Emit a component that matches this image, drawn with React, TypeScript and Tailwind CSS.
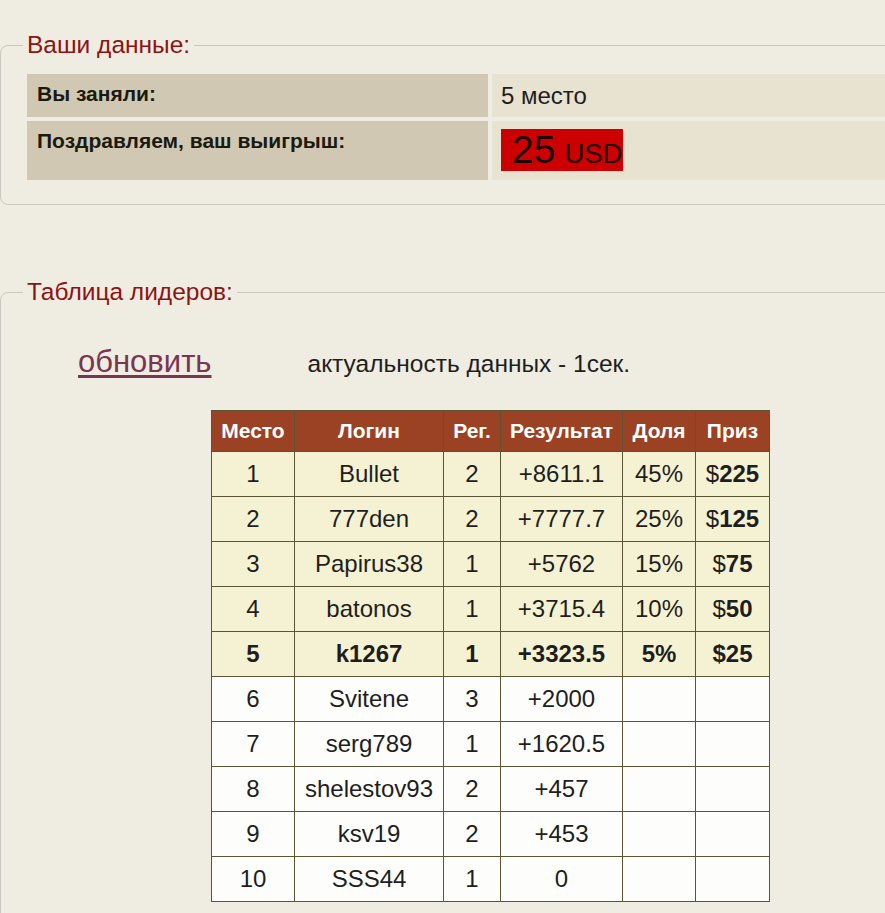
import React from 'react';

interface Leader {
  place: number;
  login: string;
  reg: number;
  result: string;
  share?: string;
  prize?: number;
  me?: boolean;
}

const leaders: Leader[] = [
  { place: 1, login: 'Bullet', reg: 2, result: '+8611.1', share: '45%', prize: 225 },
  { place: 2, login: '777den', reg: 2, result: '+7777.7', share: '25%', prize: 125 },
  { place: 3, login: 'Papirus38', reg: 1, result: '+5762', share: '15%', prize: 75 },
  { place: 4, login: 'batonos', reg: 1, result: '+3715.4', share: '10%', prize: 50 },
  { place: 5, login: 'k1267', reg: 1, result: '+3323.5', share: '5%', prize: 25, me: true },
  { place: 6, login: 'Svitene', reg: 3, result: '+2000' },
  { place: 7, login: 'serg789', reg: 1, result: '+1620.5' },
  { place: 8, login: 'shelestov93', reg: 2, result: '+457' },
  { place: 9, login: 'ksv19', reg: 2, result: '+453' },
  { place: 10, login: 'SSS44', reg: 1, result: '0' },
];

const cell = 'border border-[#5b5535] px-1 text-center';

export default function App() {
  return (
    <div
      className="w-[885px] h-[913px] overflow-hidden bg-[#efece1] text-[#1e1e1e] pt-[31px]"
      style={{ fontFamily: '"Liberation Sans", Arial, sans-serif' }}
    >
      {/* Ваши данные */}
      <fieldset className="w-[920px] border border-[#c9c7bf] rounded-lg pl-[22px] pt-[15px] pb-[24px]">
        <legend className="px-[4px] text-[24.5px] leading-[28px] text-[#8c1414]">Ваши данные:</legend>
        <div className="ml-[4px] grid grid-cols-[461px_1fr] gap-[4px]">
          <div className="bg-[#d0c8b2] px-[10px] pt-[8px] h-[43px] text-[21px] leading-[23px] font-bold text-[#1a1a10]">
            Вы заняли:
          </div>
          <div className="bg-[#e8e2d0] px-[9px] py-[8px] h-[43px] text-[24px] leading-[27px]">5 место</div>
          <div className="bg-[#d0c8b2] px-[10px] pt-[8px] h-[59px] text-[21px] leading-[23px] font-bold text-[#1a1a10]">
            Поздравляем, ваш выигрыш:
          </div>
          <div className="bg-[#e8e2d0] px-[9px] py-[8px] h-[59px]">
            <span className="inline-flex items-baseline h-[42px] bg-[#cc0000] pl-[11px] pr-[1px] text-[#1a0000]">
              <span className="text-[39px] leading-[42px]">25</span>
              <span className="ml-[9px] text-[27.5px] leading-[42px]">USD</span>
            </span>
          </div>
        </div>
      </fieldset>

      {/* Таблица лидеров */}
      <fieldset className="mt-[73px] w-[920px] h-[700px] border border-[#c9c7bf] rounded-lg pl-[22px] pt-[38px]">
        <legend className="px-[4px] text-[24.5px] leading-[28px] text-[#8c1414]">Таблица лидеров:</legend>
        <div className="flex items-baseline">
          <a href="#" className="ml-[55px] text-[31px] leading-[35px] text-[#7a3550] underline underline-offset-[3px]">
            обновить
          </a>
          <span className="ml-[96px] text-[24.5px] text-[#1e1e1e]">актуальность данных - 1сек.</span>
        </div>
        <table className="mt-[27px] ml-[188px] w-[558px] table-fixed border-collapse">
          <colgroup>
            <col className="w-[83px]" />
            <col className="w-[149px]" />
            <col className="w-[57px]" />
            <col className="w-[122px]" />
            <col className="w-[73px]" />
            <col className="w-[74px]" />
          </colgroup>
          <thead>
            <tr className="h-[41px] bg-[#9a4223] text-white text-[21px] font-bold">
              {['Место', 'Логин', 'Рег.', 'Результат', 'Доля', 'Приз'].map((h) => (
                <th key={h} className="border border-[#5b5535] p-0 leading-[24px] text-center whitespace-nowrap">
                  {h}
                </th>
              ))}
            </tr>
          </thead>
          <tbody>
            {leaders.map((r) => (
              <tr
                key={r.place}
                className={`h-[45px] text-[24px] ${r.prize ? 'bg-[#f5f2d3]' : 'bg-[#fdfdfb]'} ${r.me ? 'font-bold' : ''}`}
              >
                <td className={cell}>{r.place}</td>
                <td className={cell}>{r.login}</td>
                <td className={cell}>{r.reg}</td>
                <td className={cell}>{r.result}</td>
                <td className={cell}>{r.share}</td>
                <td className={cell}>
                  {r.prize !== undefined && (
                    <>
                      $<b>{r.prize}</b>
                    </>
                  )}
                </td>
              </tr>
            ))}
          </tbody>
        </table>
      </fieldset>
    </div>
  );
}
